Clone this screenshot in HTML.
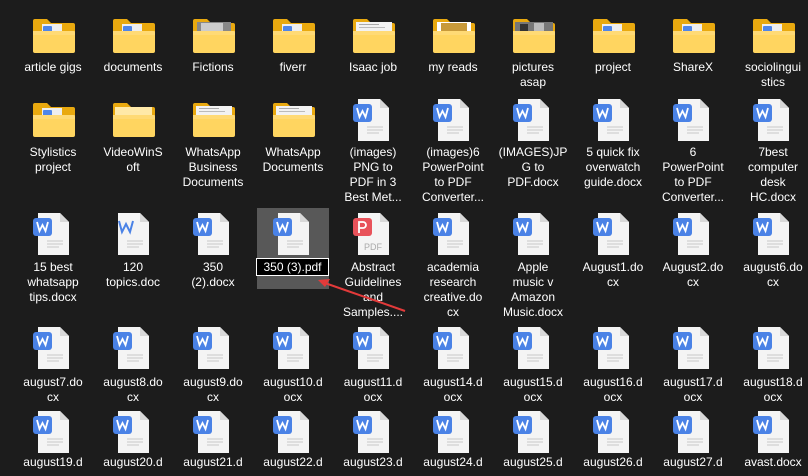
<!DOCTYPE html>
<html><head><meta charset="utf-8"><style>
body{margin:0;width:808px;height:476px;background:#1c1c1c;overflow:hidden;position:relative;font-family:"Liberation Sans",sans-serif;font-size:12px;color:#fff}
.i{position:absolute;width:80px}
.i svg{position:absolute;left:18px}
.i svg.f{left:19px}
.l{position:absolute;left:0;width:80px;text-align:center;line-height:15px;word-wrap:break-word}
.sel{position:absolute;left:257px;top:208px;width:72px;height:81px;background:#585858}
.ren{position:absolute;left:256px;top:258px;width:71px;height:16px;border:1px solid #fff;background:#000;line-height:16px;text-align:center}
</style></head><body>
<svg width="0" height="0" style="position:absolute"><defs>
<g id="fb"><path d="M1 3a2 2 0 0 1 2-2h12l4 4h22a2 2 0 0 1 2 2v26H1z" fill="#e9a90f"/></g>
<g id="ff"><path d="M1 13h40a2 2 0 0 1 2 2v18a2 2 0 0 1-2 2H3a2 2 0 0 1-2-2z" fill="#ffd560"/><path d="M1 13h42v4H1z" fill="#ffe08a" opacity=".5"/></g>
<g id="fw"><use href="#fb"/><rect x="10" y="6" width="20" height="14" fill="#eee"/><rect x="11" y="8" width="9" height="9" rx="1" fill="#4f86e8"/><use href="#ff"/></g>
<g id="fp"><use href="#fb"/><rect x="3" y="5" width="37" height="10" fill="#ffe9a8"/><use href="#ff"/></g>
<g id="fi"><use href="#fb"/><rect x="5" y="4" width="34" height="12" fill="#888"/><rect x="9" y="5" width="22" height="8" fill="#ccc"/><use href="#ff"/></g>
<g id="fd"><use href="#fb"/><rect x="4" y="4" width="36" height="12" fill="#f2f2f2"/><rect x="7" y="6" width="20" height="1" fill="#aaa"/><rect x="7" y="9" width="26" height="1" fill="#bbb"/><use href="#ff"/></g>
<g id="fo"><use href="#fb"/><rect x="5" y="4" width="34" height="12" fill="#fff"/><rect x="9" y="5" width="26" height="10" fill="#c89a3a"/><use href="#ff"/></g>
<g id="fg"><use href="#fb"/><rect x="3" y="4" width="38" height="12" fill="#777"/><rect x="8" y="6" width="8" height="9" fill="#333"/><rect x="22" y="5" width="10" height="10" fill="#bbb"/><use href="#ff"/></g>
<g id="dw"><path d="M5 0h22l9 9v33H5z" fill="#f4f4f4"/><path d="M27 0v9h9z" fill="#d8d8d8"/><rect x="0" y="5" width="19" height="18" rx="3" fill="#4a82e6"/><path d="M4 9l2.5 9 3-6 3 6 2.5-9" stroke="#fff" stroke-width="1.8" fill="none"/><path d="M14 28h16M14 31h16M14 34h12" stroke="#c8c8c8" stroke-width="1"/></g>
<g id="dp"><path d="M5 0h22l9 9v33H5z" fill="#f4f4f4"/><path d="M27 0v9h9z" fill="#d8d8d8"/><rect x="0" y="5" width="19" height="18" rx="3" fill="#e8525a"/><path d="M6 20V9h4a3 3 0 0 1 0 6H6" stroke="#fff" stroke-width="1.8" fill="none"/><text x="20" y="37" font-size="9" fill="#aaa" text-anchor="middle" font-family="Liberation Sans">PDF</text></g>
<g id="do"><path d="M5 0h22l9 9v33H5z" fill="#f4f4f4"/><path d="M27 0v9h9z" fill="#d8d8d8"/><path d="M6 8l3 11 4-8 4 8 3-11" stroke="#4a82e6" stroke-width="2" fill="none"/><path d="M14 28h16M14 31h16M14 34h12" stroke="#c8c8c8"/></g>
</defs></svg>

<div class="sel"></div>

<!-- row1 -->
<div class="i" style="left:13px;top:18px"><svg class="f" width="44" height="36"><use href="#fw"/></svg><div class="l" style="top:42px">article gigs</div></div>
<div class="i" style="left:93px;top:18px"><svg class="f" width="44" height="36"><use href="#fw"/></svg><div class="l" style="top:42px">documents</div></div>
<div class="i" style="left:173px;top:18px"><svg class="f" width="44" height="36"><use href="#fi"/></svg><div class="l" style="top:42px">Fictions</div></div>
<div class="i" style="left:253px;top:18px"><svg class="f" width="44" height="36"><use href="#fw"/></svg><div class="l" style="top:42px">fiverr</div></div>
<div class="i" style="left:333px;top:18px"><svg class="f" width="44" height="36"><use href="#fd"/></svg><div class="l" style="top:42px">Isaac job</div></div>
<div class="i" style="left:413px;top:18px"><svg class="f" width="44" height="36"><use href="#fo"/></svg><div class="l" style="top:42px">my reads</div></div>
<div class="i" style="left:493px;top:18px"><svg class="f" width="44" height="36"><use href="#fg"/></svg><div class="l" style="top:42px">pictures<br>asap</div></div>
<div class="i" style="left:573px;top:18px"><svg class="f" width="44" height="36"><use href="#fw"/></svg><div class="l" style="top:42px">project</div></div>
<div class="i" style="left:653px;top:18px"><svg class="f" width="44" height="36"><use href="#fw"/></svg><div class="l" style="top:42px">ShareX</div></div>
<div class="i" style="left:733px;top:18px"><svg class="f" width="44" height="36"><use href="#fw"/></svg><div class="l" style="top:42px">sociolingui<br>stics</div></div>

<!-- row2 -->
<div class="i" style="left:13px;top:102px"><svg class="f" width="44" height="36"><use href="#fw"/></svg><div class="l" style="top:43px">Stylistics<br>project</div></div>
<div class="i" style="left:93px;top:102px"><svg class="f" width="44" height="36"><use href="#fp"/></svg><div class="l" style="top:43px">VideoWinS<br>oft</div></div>
<div class="i" style="left:173px;top:102px"><svg class="f" width="44" height="36"><use href="#fd"/></svg><div class="l" style="top:43px">WhatsApp<br>Business<br>Documents</div></div>
<div class="i" style="left:253px;top:102px"><svg class="f" width="44" height="36"><use href="#fd"/></svg><div class="l" style="top:43px">WhatsApp<br>Documents</div></div>
<div class="i" style="left:333px;top:99px"><svg width="38" height="43" style="left:20px"><use href="#dw"/></svg><div class="l" style="top:46px">(images)<br>PNG to<br>PDF in 3<br>Best Met...</div></div>
<div class="i" style="left:413px;top:99px"><svg width="38" height="43" style="left:20px"><use href="#dw"/></svg><div class="l" style="top:46px">(images)6<br>PowerPoint<br>to PDF<br>Converter...</div></div>
<div class="i" style="left:493px;top:99px"><svg width="38" height="43" style="left:20px"><use href="#dw"/></svg><div class="l" style="top:46px">(IMAGES)JP<br>G to<br>PDF.docx</div></div>
<div class="i" style="left:573px;top:99px"><svg width="38" height="43" style="left:20px"><use href="#dw"/></svg><div class="l" style="top:46px">5 quick fix<br>overwatch<br>guide.docx</div></div>
<div class="i" style="left:653px;top:99px"><svg width="38" height="43" style="left:20px"><use href="#dw"/></svg><div class="l" style="top:46px">6<br>PowerPoint<br>to PDF<br>Converter...</div></div>
<div class="i" style="left:733px;top:99px"><svg width="38" height="43" style="left:20px"><use href="#dw"/></svg><div class="l" style="top:46px">7best<br>computer<br>desk<br>HC.docx</div></div>

<!-- row3 -->
<div class="i" style="left:13px;top:213px"><svg width="38" height="43" style="left:20px"><use href="#dw"/></svg><div class="l" style="top:47px">15 best<br>whatsapp<br>tips.docx</div></div>
<div class="i" style="left:93px;top:213px"><svg width="38" height="43" style="left:20px"><use href="#do"/></svg><div class="l" style="top:47px">120<br>topics.doc</div></div>
<div class="i" style="left:173px;top:213px"><svg width="38" height="43" style="left:20px"><use href="#dw"/></svg><div class="l" style="top:47px">350<br>(2).docx</div></div>
<div class="i" style="left:253px;top:213px"><svg width="38" height="43" style="left:20px"><use href="#dw"/></svg></div>
<div class="ren">350 (3).pdf</div>
<div class="i" style="left:333px;top:213px"><svg width="38" height="43" style="left:20px"><use href="#dp"/></svg><div class="l" style="top:47px">Abstract<br>Guidelines<br>and<br>Samples....</div></div>
<div class="i" style="left:413px;top:213px"><svg width="38" height="43" style="left:20px"><use href="#dw"/></svg><div class="l" style="top:47px">academia<br>research<br>creative.do<br>cx</div></div>
<div class="i" style="left:493px;top:213px"><svg width="38" height="43" style="left:20px"><use href="#dw"/></svg><div class="l" style="top:47px">Apple<br>music v<br>Amazon<br>Music.docx</div></div>
<div class="i" style="left:573px;top:213px"><svg width="38" height="43" style="left:20px"><use href="#dw"/></svg><div class="l" style="top:47px">August1.do<br>cx</div></div>
<div class="i" style="left:653px;top:213px"><svg width="38" height="43" style="left:20px"><use href="#dw"/></svg><div class="l" style="top:47px">August2.do<br>cx</div></div>
<div class="i" style="left:733px;top:213px"><svg width="38" height="43" style="left:20px"><use href="#dw"/></svg><div class="l" style="top:47px">august6.do<br>cx</div></div>

<!-- row4 -->
<div class="i" style="left:13px;top:327px"><svg width="38" height="43" style="left:20px"><use href="#dw"/></svg><div class="l" style="top:48px">august7.do<br>cx</div></div>
<div class="i" style="left:93px;top:327px"><svg width="38" height="43" style="left:20px"><use href="#dw"/></svg><div class="l" style="top:48px">august8.do<br>cx</div></div>
<div class="i" style="left:173px;top:327px"><svg width="38" height="43" style="left:20px"><use href="#dw"/></svg><div class="l" style="top:48px">august9.do<br>cx</div></div>
<div class="i" style="left:253px;top:327px"><svg width="38" height="43" style="left:20px"><use href="#dw"/></svg><div class="l" style="top:48px">august10.d<br>ocx</div></div>
<div class="i" style="left:333px;top:327px"><svg width="38" height="43" style="left:20px"><use href="#dw"/></svg><div class="l" style="top:48px">august11.d<br>ocx</div></div>
<div class="i" style="left:413px;top:327px"><svg width="38" height="43" style="left:20px"><use href="#dw"/></svg><div class="l" style="top:48px">august14.d<br>ocx</div></div>
<div class="i" style="left:493px;top:327px"><svg width="38" height="43" style="left:20px"><use href="#dw"/></svg><div class="l" style="top:48px">august15.d<br>ocx</div></div>
<div class="i" style="left:573px;top:327px"><svg width="38" height="43" style="left:20px"><use href="#dw"/></svg><div class="l" style="top:48px">august16.d<br>ocx</div></div>
<div class="i" style="left:653px;top:327px"><svg width="38" height="43" style="left:20px"><use href="#dw"/></svg><div class="l" style="top:48px">august17.d<br>ocx</div></div>
<div class="i" style="left:733px;top:327px"><svg width="38" height="43" style="left:20px"><use href="#dw"/></svg><div class="l" style="top:48px">august18.d<br>ocx</div></div>

<!-- row5 -->
<div class="i" style="left:13px;top:411px"><svg width="38" height="43" style="left:20px"><use href="#dw"/></svg><div class="l" style="top:44px">august19.d</div></div>
<div class="i" style="left:93px;top:411px"><svg width="38" height="43" style="left:20px"><use href="#dw"/></svg><div class="l" style="top:44px">august20.d</div></div>
<div class="i" style="left:173px;top:411px"><svg width="38" height="43" style="left:20px"><use href="#dw"/></svg><div class="l" style="top:44px">august21.d</div></div>
<div class="i" style="left:253px;top:411px"><svg width="38" height="43" style="left:20px"><use href="#dw"/></svg><div class="l" style="top:44px">august22.d</div></div>
<div class="i" style="left:333px;top:411px"><svg width="38" height="43" style="left:20px"><use href="#dw"/></svg><div class="l" style="top:44px">august23.d</div></div>
<div class="i" style="left:413px;top:411px"><svg width="38" height="43" style="left:20px"><use href="#dw"/></svg><div class="l" style="top:44px">august24.d</div></div>
<div class="i" style="left:493px;top:411px"><svg width="38" height="43" style="left:20px"><use href="#dw"/></svg><div class="l" style="top:44px">august25.d</div></div>
<div class="i" style="left:573px;top:411px"><svg width="38" height="43" style="left:20px"><use href="#dw"/></svg><div class="l" style="top:44px">august26.d</div></div>
<div class="i" style="left:653px;top:411px"><svg width="38" height="43" style="left:20px"><use href="#dw"/></svg><div class="l" style="top:44px">august27.d</div></div>
<div class="i" style="left:733px;top:411px"><svg width="38" height="43" style="left:20px"><use href="#dw"/></svg><div class="l" style="top:44px">avast.docx</div></div>

<svg width="808" height="476" style="position:absolute;left:0;top:0;pointer-events:none">
<line x1="405" y1="311" x2="322" y2="282" stroke="#e23a3a" stroke-width="2"/>
<path d="M318 280l12 -1l-5 8z" fill="#e23a3a"/>
</svg>
</body></html>
